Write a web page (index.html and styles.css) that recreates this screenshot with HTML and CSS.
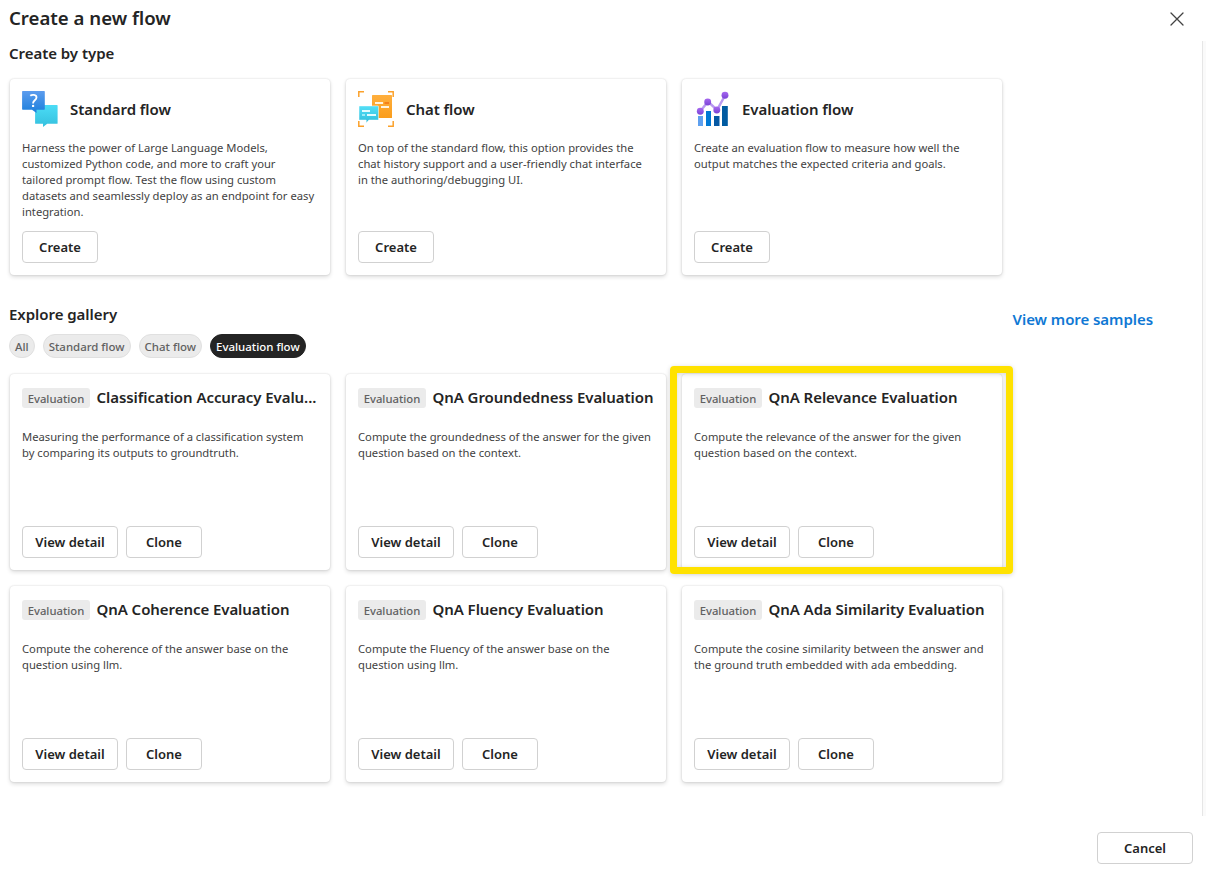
FILE: index.html
```html
<!DOCTYPE html>
<html lang="en">
<head>
<meta charset="utf-8">
<title>Create a new flow</title>
<link rel="stylesheet" href="styles.css">
</head>
<body>
<div class="panel">
  <header class="panel-header">
    <h1 class="panel-title">Create a new flow</h1>
    <svg class="close" width="14" height="14" viewBox="0 0 14 14" fill="none" stroke="#424242" stroke-width="1.3" stroke-linecap="round"><path d="M1 1l12 12M13 1L1 13"/></svg>
  </header>
  <main class="panel-body">
    <h2 class="section-title">Create by type</h2>
    <div class="grid types">
      <article class="card">
        <div class="type-head">
          <svg width="36" height="36" viewBox="0 0 36 36">
            <defs>
              <linearGradient id="std-blue" x1="0" y1="0" x2="0" y2="1"><stop offset="0" stop-color="#5c9cee"/><stop offset="1" stop-color="#1b7fdc"/></linearGradient>
              <linearGradient id="std-cyan" x1="0" y1="0" x2="0" y2="1"><stop offset="0" stop-color="#4bdcf6"/><stop offset="1" stop-color="#35c0de"/></linearGradient>
            </defs>
            <path fill="url(#std-cyan)" d="M13.7 14h21.3a.6.6 0 0 1 .6.6v17.6a.6.6 0 0 1-.6.6H25.2L21 36v-3.2h-7.3a.6.6 0 0 1-.6-.6V14.600a.6.6 0 0 1 .6-.6z"/>
            <path fill="url(#std-blue)" d="M.7 0h21.500a.6.6 0 0 1 .6.6v17.500a.6.6 0 0 1-.6.6h-7.700v3.300L10 18.700H.7a.6.6 0 0 1-.6-.6V.6A.6.6 0 0 1 .7 0z"/>
            <path fill="none" stroke="#fff" stroke-width="1.800" d="M8.300 4.700c1.500-1.300 6.200-1.500 6.200 1.700 0 2.800-3.400 2.900-3.400 5.700v.5"/>
            <circle cx="11.100" cy="14.900" r="1.200" fill="#fff"/>
          </svg>
          <h3 class="card-title">Standard flow</h3>
        </div>
        <p class="desc">Harness the power of Large Language Models,<br>customized Python code, and more to craft your<br>tailored prompt flow. Test the flow using custom<br>datasets and seamlessly deploy as an endpoint for easy<br>integration.</p>
        <div class="actions"><button class="btn">Create</button></div>
      </article>
      <article class="card">
        <div class="type-head">
          <svg width="36" height="36" viewBox="0 0 36 36">
            <defs>
              <linearGradient id="chat-orange" x1="0" y1="0" x2="0" y2="1"><stop offset="0" stop-color="#ffaf3d"/><stop offset="1" stop-color="#fa9d1c"/></linearGradient>
              <linearGradient id="chat-cyan" x1="0" y1="0" x2="0" y2="1"><stop offset="0" stop-color="#53dff7"/><stop offset="1" stop-color="#31bddb"/></linearGradient>
            </defs>
            <path fill="none" stroke="#fba12b" stroke-width="1.500" d="M.8 6V.8H6M30 .8h5.200V6M.8 30v5.200H6M30 35.200h5.200V30"/>
            <rect x="14" y="4" width="20" height="23" rx=".6" fill="url(#chat-orange)"/>
            <path stroke="#fff3df" stroke-width="1.800" d="M17 12h8M23 16h8"/><path stroke="#f47b16" stroke-width="1.800" d="M26.500 12H31"/>
            <path fill="url(#chat-cyan)" stroke="#fff" stroke-width=".5" d="M1.600 14.900h18.300a.6.6 0 0 1 .6.6v13a.6.6 0 0 1-.6.6h-9L8.200 32v-2.900H1.600a.6.6 0 0 1-.6-.6v-13a.6.6 0 0 1 .6-.6z"/>
            <path stroke="#e2fbff" stroke-width="1.800" d="M4 20h8M9 24h9"/><path stroke="#a5effb" stroke-width="1.800" d="M4 24h3"/>
          </svg>
          <h3 class="card-title">Chat flow</h3>
        </div>
        <p class="desc">On top of the standard flow, this option provides the<br>chat history support and a user-friendly chat interface<br>in the authoring/debugging UI.</p>
        <div class="actions"><button class="btn">Create</button></div>
      </article>
      <article class="card">
        <div class="type-head">
          <svg width="36" height="36" viewBox="0 0 36 36">
            <defs><linearGradient id="dot" x1="0" y1="0" x2="0" y2="1"><stop offset="0" stop-color="#a667ef"/><stop offset="1" stop-color="#7a43d6"/></linearGradient></defs>
            <path fill="#5ea0ef" d="M4 25h5v10H4z"/><path fill="#0078d4" d="M12 20h5v15h-5z"/><path fill="#0659a4" d="M20 25h5.500v10H20z"/><path fill="#005ba1" d="M28 15h5.800v20H28z"/>
            <path fill="none" stroke="#b99af0" stroke-width="2.500" d="M6.500 20l7.500-9.500 9 8.500L31 4.500"/>
            <g fill="url(#dot)"><circle cx="6.300" cy="20.300" r="3.450"/><circle cx="13.700" cy="11" r="3.450"/><circle cx="22.800" cy="19" r="3.450"/><circle cx="31" cy="4.300" r="3.450"/></g>
          </svg>
          <h3 class="card-title">Evaluation flow</h3>
        </div>
        <p class="desc">Create an evaluation flow to measure how well the<br>output matches the expected criteria and goals.</p>
        <div class="actions"><button class="btn">Create</button></div>
      </article>
    </div>

    <div class="gallery-head">
      <div>
        <h2 class="section-title">Explore gallery</h2>
        <div class="filters">
          <span class="pill">All</span><span class="pill">Standard flow</span><span class="pill">Chat flow</span><span class="pill selected">Evaluation flow</span>
        </div>
      </div>
      <a class="more">View more samples</a>
    </div>

    <div class="grid gallery">
      <article class="card">
        <div class="sample-head"><span class="tag">Evaluation</span><h3 class="card-title">Classification Accuracy Evalu...</h3></div>
        <p class="desc">Measuring the performance of a classification system<br>by comparing its outputs to groundtruth.</p>
        <div class="actions"><button class="btn wide">View detail</button><button class="btn">Clone</button></div>
      </article>
      <article class="card">
        <div class="sample-head"><span class="tag">Evaluation</span><h3 class="card-title">QnA Groundedness Evaluation</h3></div>
        <p class="desc">Compute the groundedness of the answer for the given<br>question based on the context.</p>
        <div class="actions"><button class="btn wide">View detail</button><button class="btn">Clone</button></div>
      </article>
      <article class="card highlighted">
        <div class="sample-head"><span class="tag">Evaluation</span><h3 class="card-title">QnA Relevance Evaluation</h3></div>
        <p class="desc">Compute the relevance of the answer for the given<br>question based on the context.</p>
        <div class="actions"><button class="btn wide">View detail</button><button class="btn">Clone</button></div>
        <div class="highlight"></div>
      </article>
      <article class="card">
        <div class="sample-head"><span class="tag">Evaluation</span><h3 class="card-title">QnA Coherence Evaluation</h3></div>
        <p class="desc">Compute the coherence of the answer base on the<br>question using llm.</p>
        <div class="actions"><button class="btn wide">View detail</button><button class="btn">Clone</button></div>
      </article>
      <article class="card">
        <div class="sample-head"><span class="tag">Evaluation</span><h3 class="card-title">QnA Fluency Evaluation</h3></div>
        <p class="desc">Compute the Fluency of the answer base on the<br>question using llm.</p>
        <div class="actions"><button class="btn wide">View detail</button><button class="btn">Clone</button></div>
      </article>
      <article class="card">
        <div class="sample-head"><span class="tag">Evaluation</span><h3 class="card-title">QnA Ada Similarity Evaluation</h3></div>
        <p class="desc">Compute the cosine similarity between the answer and<br>the ground truth embedded with ada embedding.</p>
        <div class="actions"><button class="btn wide">View detail</button><button class="btn">Clone</button></div>
      </article>
    </div>
  </main>
  <footer class="panel-footer"><button class="btn wide">Cancel</button></footer>
</div>
</body>
</html>
```

FILE: styles.css
```css
* { box-sizing: border-box; }
body { margin: 0; background: #fff; color: #242424; font-family: "Noto Sans", "Open Sans", sans-serif; white-space: nowrap; }
h1, h2, h3, p { margin: 0; font-weight: 600; }
svg { display: block; flex: none; }
.panel { width: 1206px; height: 870px; display: flex; flex-direction: column; overflow: hidden; }
.panel-header { height: 41px; padding: 4px 22px 0 9px; display: flex; justify-content: space-between; align-items: flex-start; }
.panel-title { font-size: 18.6px; line-height: 28px; }
.close { margin-top: 8px; }
.panel-body { height: 775px; padding: 1px 50px 0 9px; border-right: 3px solid #fafafa; box-shadow: inset -1px 0 #e6e6e6; }
.section-title { font-size: 15px; line-height: 22px; letter-spacing: -.04px; }
.grid { display: grid; grid-template-columns: repeat(3, 320px); gap: 16px; padding-left: 1px; }
.types { margin-top: 15px; }
.card { height: 196px; padding: 12px; display: flex; flex-direction: column; border-radius: 4px; background: #fff; box-shadow: 0 0 2px rgba(0,0,0,.16), 0 2px 4px rgba(0,0,0,.14); }
.type-head { display: flex; align-items: center; gap: 12px; height: 36px; }
.card-title { font-size: 15px; line-height: 22px; letter-spacing: -.06px; }
.desc { font-size: 11.23px; line-height: 16px; font-weight: 400; color: #424242; }
.types .desc { margin-top: 13px; }
.actions { margin-top: auto; display: flex; gap: 8px; }
.btn { width: 76px; height: 32px; padding: 0; border: 1px solid #d1d1d1; border-radius: 4px; background: #fff; color: #242424; font: 600 13px/20px "Noto Sans", "Open Sans", sans-serif; }
.btn.wide { width: 96px; }
.gallery-head { display: flex; justify-content: space-between; margin-top: 28px; }
.more { color: #0f78d4; font-size: 15px; font-weight: 600; line-height: 22px; letter-spacing: -.06px; margin-top: 5px; }
.filters { display: flex; gap: 8px; margin-top: 9px; }
.pill { height: 24px; padding: 0 5px; border: 1px solid #e0e0e0; border-radius: 12px; background: #ebebeb; color: #616161; font-size: 11.45px; font-weight: 500; line-height: 23px; }
.pill.selected { background: #242424; border-color: #242424; color: #fff; }
.gallery { margin-top: 16px; }
.sample-head { display: flex; align-items: center; gap: 6.5px; height: 24px; }
.sample-head .card-title { margin-top: -2px; }
.tag { flex: none; width: 68px; height: 20px; border-radius: 3px; background: #ebebeb; color: #616161; font-size: 11.3px; font-weight: 500; line-height: 21px; text-align: center; }
.gallery .desc { margin-top: 19px; }
.highlighted { position: relative; }
.highlight { position: absolute; left: -12px; top: -8px; width: 343px; height: 208px; border: 7px solid #ffe200; border-radius: 4px; box-shadow: 0 1px 5px rgba(0,0,0,.16), inset 0 1px 5px rgba(0,0,0,.16); }
.panel-footer { padding: 16px 13px 0; display: flex; justify-content: flex-end; }
```
